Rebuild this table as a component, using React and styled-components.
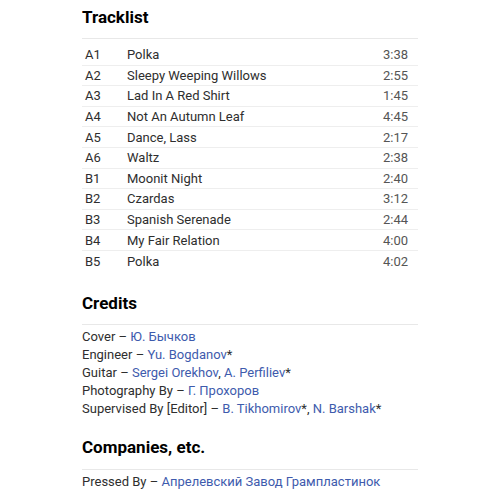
import styled, { createGlobalStyle } from 'styled-components'

const tracks = [
  { pos: "A1", title: "Polka", time: "3:38" },
  { pos: "A2", title: "Sleepy Weeping Willows", time: "2:55" },
  { pos: "A3", title: "Lad In A Red Shirt", time: "1:45" },
  { pos: "A4", title: "Not An Autumn Leaf", time: "4:45" },
  { pos: "A5", title: "Dance, Lass", time: "2:17" },
  { pos: "A6", title: "Waltz", time: "2:38" },
  { pos: "B1", title: "Moonit Night", time: "2:40" },
  { pos: "B2", title: "Czardas", time: "3:12" },
  { pos: "B3", title: "Spanish Serenade", time: "2:44" },
  { pos: "B4", title: "My Fair Relation", time: "4:00" },
  { pos: "B5", title: "Polka", time: "4:02" }
]

const credits = [
  { role: "Cover", names: [{ name: "Ю. Бычков" }] },
  { role: "Engineer", names: [{ name: "Yu. Bogdanov", star: true }] },
  { role: "Guitar", names: [{ name: "Sergei Orekhov" }, { name: "A. Perfiliev", star: true }] },
  { role: "Photography By", names: [{ name: "Г. Прохоров" }] },
  { role: "Supervised By [Editor]", names: [{ name: "B. Tikhomirov", star: true }, { name: "N. Barshak", star: true }] }
]

const GlobalStyle = createGlobalStyle`
  body {
    margin: 0;
    background: #fff;
    font-family: Roboto, "Noto Sans", sans-serif;
    color: #2e2e2e;
  }
`

const Page = styled.div`
  width: 336px;
  padding: 7px 0 0 82px;
`

const Heading = styled.h2`
  margin: ${props => props.$top}px 0 0;
  padding-bottom: ${props => props.$pad}px;
  font-size: 17px;
  line-height: 20px;
  font-weight: 700;
  color: #000;
  border-bottom: 1px solid #e8e8e8;
`

const Table = styled.div`
  margin-top: 6px;
`

const Row = styled.div`
  display: flex;
  align-items: center;
  height: 20.6px;
  font-size: 13px;
  border-bottom: ${props => props.$last ? "none" : "1px solid #eee"};
  box-sizing: border-box;
`

const Pos = styled.span`
  width: 45px;
  padding-left: 3px;
  box-sizing: border-box;
  flex-shrink: 0;
`

const Title = styled.span`
  flex: 1;
`

const Time = styled.span`
  padding-right: 10px;
  color: #555;
`

const List = styled.div`
  margin-top: 3px;
  font-size: 13px;
  line-height: 18px;
`

const Link = styled.a`
  color: #3e5bad;
  text-decoration: none;
`

function App() {
  return (
    <Page>
      <GlobalStyle />
      <Heading $top={0} $pad={11}>Tracklist</Heading>
      <Table>
        {tracks.map((t, i) => (
          <Row key={t.pos} $last={i === tracks.length - 1}>
            <Pos>{t.pos}</Pos>
            <Title>{t.title}</Title>
            <Time>{t.time}</Time>
          </Row>
        ))}
      </Table>

      <Heading $top={21} $pad={11}>Credits</Heading>
      <List>
        {credits.map(c => (
          <div key={c.role}>
            {c.role} – {c.names.map((n, i) => (
              <span key={n.name}>
                {i > 0 && ", "}
                <Link href="#">{n.name}</Link>{n.star && "*"}
              </span>
            ))}
          </div>
        ))}
      </List>

      <Heading $top={19} $pad={12}>Companies, etc.</Heading>
      <List>
        <div>Pressed By – <Link href="#">Апрелевский Завод Грампластинок</Link></div>
      </List>
    </Page>
  )
}

export default App
